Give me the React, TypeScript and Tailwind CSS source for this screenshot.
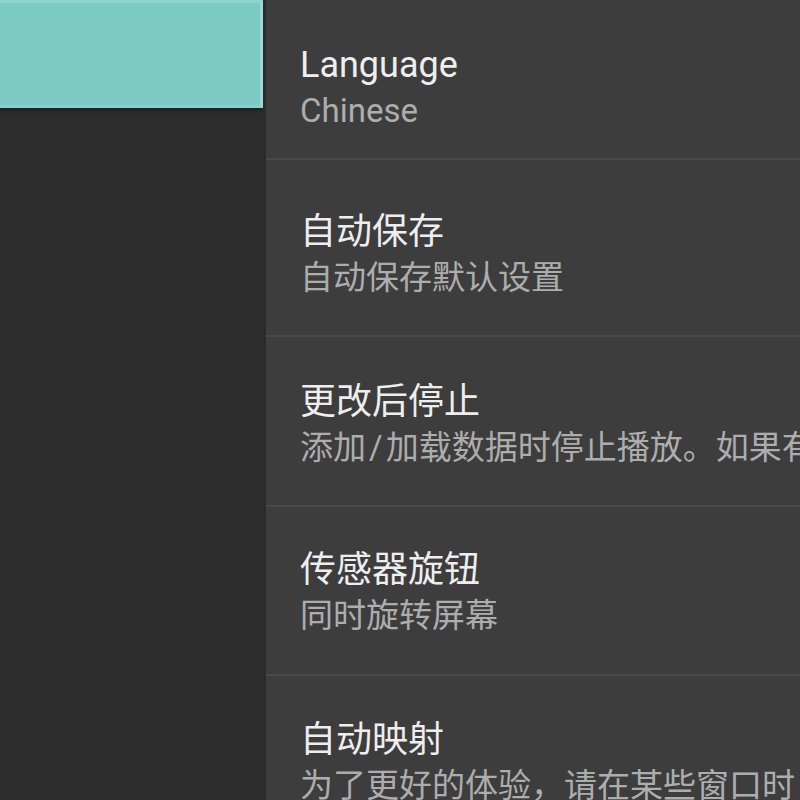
import React from "react";

type Row = { title: string; sub: React.ReactNode; cls: string; pad: string };

const rows: Row[] = [
  { title: "Language", sub: "Chinese", cls: "h-[158px]", pad: "pt-[42px]" },
  { title: "自动保存", sub: "自动保存默认设置", cls: "h-[177px] border-t-2 border-[#4a4a4a]", pad: "pt-[49px]" },
  {
    title: "更改后停止",
    sub: (
      <>
        添加<span className="px-[3px]">/</span>加载数据时停止播放。如果有
      </>
    ),
    cls: "h-[170px] border-t-2 border-[#4a4a4a]",
    pad: "pt-[42px]",
  },
  { title: "传感器旋钮", sub: "同时旋转屏幕", cls: "h-[169px] border-t-2 border-[#4a4a4a]", pad: "pt-[40px]" },
  { title: "自动映射", sub: "为了更好的体验，请在某些窗口时", cls: "h-[170px] border-t-2 border-[#4a4a4a]", pad: "pt-[41px]" },
];

export default function App() {
  return (
    <div
      className="w-[800px] h-[800px] overflow-hidden flex bg-[#3c3c3c]"
      style={{ fontFamily: 'Roboto, "Noto Sans CJK SC", sans-serif' }}
    >
      <div className="w-[263px] shrink-0 h-full bg-[#2e2d2d] flex flex-col">
        <div className="h-[108px] bg-[#7dccc4] border-t-[3px] border-t-[#8fd5cc] border-b-[3px] border-b-[#8ad0c8] border-r-[3px] border-r-[#9bdad2] shadow-[0_3px_3px_#1c2221]" />
      </div>
      <div className="flex-1 h-full border-l-[3px] border-[#2a2a2a] bg-[#3d3d3d] flex flex-col overflow-hidden">
        {rows.map((r, i) => (
          <div key={i} className={`shrink-0 pl-[34px] whitespace-nowrap overflow-hidden ${r.cls} ${r.pad}`}>
            <div className="text-[36px] leading-[46px] text-[#eeeeee]">{r.title}</div>
            <div className="text-[33px] leading-[46px] text-[#adadad]">{r.sub}</div>
          </div>
        ))}
      </div>
    </div>
  );
}
